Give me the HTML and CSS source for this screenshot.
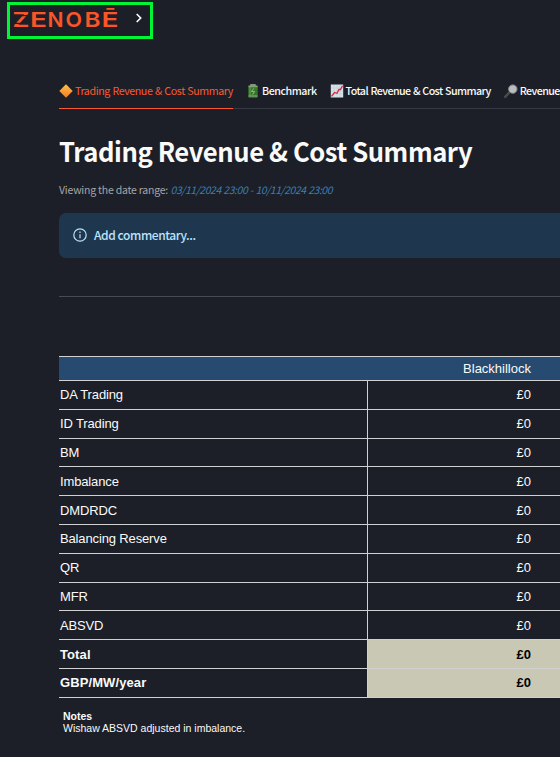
FILE: index.html
```html
<!DOCTYPE html>
<html lang="en">
<head>
<meta charset="utf-8">
<title>Trading Revenue &amp; Cost Summary</title>
<link rel="stylesheet" href="styles.css">
</head>
<body>
<header class="topbar">
  <svg class="logo" viewBox="0 0 106 22" role="img" aria-label="Zenobē">
    <g class="wordmark">
      <text x="-.5" y="20" textLength="17" lengthAdjust="spacingAndGlyphs">Z</text>
      <text x="17" y="20" textLength="17" lengthAdjust="spacingAndGlyphs">E</text>
      <text x="34.5" y="20" textLength="16" lengthAdjust="spacingAndGlyphs">N</text>
      <text x="52.5" y="20" textLength="16.5" lengthAdjust="spacingAndGlyphs">O</text>
      <text x="71.5" y="20" textLength="16" lengthAdjust="spacingAndGlyphs">B</text>
      <text x="88.5" y="20" textLength="17" lengthAdjust="spacingAndGlyphs">Ē</text>
    </g>
    <path class="cut" d="M7 8.6h9M-1 16.4h9"/>
  </svg>
  <svg class="chevron" viewBox="0 0 8 10"><path d="M1.7 1l4 4-4 4"/></svg>
</header>
<main>
  <nav class="tabs">
    <a class="tab active"><svg class="emoji" viewBox="0 0 14 14"><defs><linearGradient id="o" x2="0" y2="1"><stop stop-color="#ffc04d"/><stop offset="1" stop-color="#f47b20"/></linearGradient></defs><path d="M7 .3 13.7 7 7 13.7.3 7z" fill="url(#o)"/></svg><span>Trading Revenue &amp; Cost Summary</span></a>
    <a class="tab"><svg class="emoji" viewBox="0 0 14 14"><rect x="2.3" y="1" width="9.4" height="12.8" rx="1.2" fill="#35762b"/><rect x="4.2" y=".2" width="5.5" height="1.5" fill="#a3aba0"/><path d="M2.5 2.7h9M2.5 12h9" stroke="#8faf83"/><path d="M4 3v9" stroke="#66a653"/><path d="M7.8 4.3 5.5 7.5h3L6.6 10.6" fill="none" stroke="#b5d6a4" stroke-width=".7"/></svg><span>Benchmark</span></a>
    <a class="tab"><svg class="emoji" viewBox="0 0 14 14"><rect x=".8" y=".5" width="12.4" height="13" fill="#d8e2e9"/><path d="M4 1v12M7 1v12M10 1v12M1 4h12M1 7h12M1 10h12" stroke="#b9c9d5" stroke-width=".5"/><path d="M1.5 12.3 4.5 8.5 7 9.3 9 5.5l1.5 0 2-3.8" fill="none" stroke="#d42b3c" stroke-width="1.3"/></svg><span>Total Revenue &amp; Cost Summary</span></a>
    <a class="tab"><svg class="emoji" viewBox="0 0 14 14"><path d="M1.2 12.8 5.6 8.2" stroke="#4b4b4d" stroke-width="2.4" stroke-linecap="round"/><circle cx="8.8" cy="5.1" r="4.2" fill="#b9bcc0" stroke="#86898c"/></svg><span>Revenue</span></a>
  </nav>
  <h1>Trading Revenue &amp; Cost Summary</h1>
  <p class="range"><span class="label">Viewing the date range:</span> <em>03/11/2024 23:00 - 10/11/2024 23:00</em></p>
  <div class="alert"><svg viewBox="0 0 14 14"><circle cx="7" cy="7" r="6.2"/><path d="M7 6.2v4M7 3.6v1.3"/></svg><span>Add commentary...</span></div>
  <hr>
  <table>
    <thead><tr><th></th><th>Blackhillock</th></tr></thead>
    <tbody>
      <tr><td>DA Trading</td><td>£0</td></tr>
      <tr><td>ID Trading</td><td>£0</td></tr>
      <tr><td>BM</td><td>£0</td></tr>
      <tr><td>Imbalance</td><td>£0</td></tr>
      <tr><td>DMDRDC</td><td>£0</td></tr>
      <tr><td>Balancing Reserve</td><td>£0</td></tr>
      <tr><td>QR</td><td>£0</td></tr>
      <tr><td>MFR</td><td>£0</td></tr>
      <tr><td>ABSVD</td><td>£0</td></tr>
      <tr class="sum"><td>Total</td><td>£0</td></tr>
      <tr class="sum"><td>GBP/MW/year</td><td>£0</td></tr>
    </tbody>
  </table>
  <div class="notes"><strong>Notes</strong><br>Wishaw ABSVD adjusted in imbalance.</div>
</main>
</body>
</html>
```
FILE: styles.css
```css
* { box-sizing: border-box; }
body {
  margin: 0;
  height: 757px;
  overflow: hidden;
  background: #1c1f27;
  color: #fafafa;
  font-family: "Noto Sans CJK SC", "Noto Sans", sans-serif;
}
.topbar {
  display: flex;
  width: 146px;
  height: 37px;
  margin: 2px 0 0 7px;
  border: 3px solid #00f535;
  padding: 2px 0 0 3px;
}
.logo { width: 106px; height: 22px; overflow: visible; }
.wordmark { fill: #fb5527; font: 600 20.6px Inter, sans-serif; }
.cut { stroke: #1c1f27; stroke-width: 1.2; }
.chevron { width: 8px; height: 10px; margin: 6px 0 0 16px; fill: none; stroke: #fff; stroke-width: 1.6; }
main { padding-left: 59px; }
.tabs {
  display: flex;
  gap: 13px;
  height: 35px;
  margin-top: 35px;
  border-bottom: 1px solid #363942;
  white-space: nowrap;
}
.tab {
  display: flex;
  flex: none;
  align-items: center;
  gap: 2px;
  height: 35px;
  padding-bottom: 1px;
  font-size: 10.7px;
  font-weight: 500;
  letter-spacing: -.58px;
  word-spacing: .6px;
}
.tab span { margin-top: -2px; }
.tab.active { padding-bottom: 0; color: #fb5a30; border-bottom: 1px solid #fb5a30; font-weight: 400; letter-spacing: -.43px; }
.tab.active + .tab { letter-spacing: -.46px; }
.emoji { width: 14px; height: 14px; }
h1 {
  width: 440px;
  height: 40px;
  margin: 22px 0 0;
  line-height: 40px;
  font-size: 26.7px;
  font-weight: 700;
  letter-spacing: -.45px;
  white-space: nowrap;
  transform: scaleX(.96);
  transform-origin: left;
}
.range { margin: 9px 0 0; height: 20px; line-height: 20px; font-size: 10.5px; color: #a4a5a9; white-space: nowrap; letter-spacing: -.46px; word-spacing: .6px; }
.label { letter-spacing: -.22px; word-spacing: 0; }
.range em { color: #3b7eb0; }
.alert {
  display: flex;
  align-items: center;
  gap: 7px;
  height: 45px;
  margin-top: 13px;
  padding-left: 14px;
  border-radius: 7px 0 0 7px;
  background: #1e374f;
  color: #bce3fb;
  font-size: 12px;
  font-weight: 500;
  letter-spacing: -.42px;
}
.alert span { margin-top: -3px; }
.alert svg { width: 14px; height: 14px; margin-top: -1px; fill: none; stroke: currentColor; stroke-width: 1.2; }
hr { margin: 38px 0 59px; border: 0; border-top: 1px solid #484b52; }
table {
  width: 501px;
  border-collapse: collapse;
  table-layout: fixed;
  font: 13px "Liberation Sans", Arial, sans-serif;
}
th, td { height: 28.8px; padding: 0 1px; border-top: 1px solid #d0d1d0; border-bottom: 1px solid #d0d1d0; text-align: left; }
th { height: 24px; background: #264a70; font-weight: 400; }
th:first-child { width: 308px; }
td:first-child { letter-spacing: -.14px; }
th:last-child, td:last-child { padding-right: 29px; text-align: right; }
td:last-child { border-left: 1px solid #d0d1d0; }
.sum { font-weight: 700; }
.sum td:first-child { letter-spacing: .1px; }
.sum td:last-child { background: #c8c8b5; color: #000; }
.notes { margin: 12px 0 0 4px; font: 10.5px/12px "Liberation Sans", Arial, sans-serif; }
```
